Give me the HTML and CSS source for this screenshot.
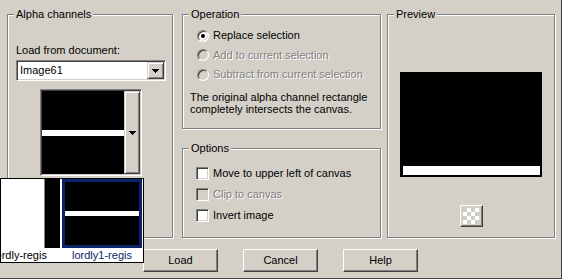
FILE: index.html
```html
<!DOCTYPE html>
<html>
<head>
  <link rel="stylesheet" href="styles.css">
</head>
<body>
  <div class="dialog">
    <div class="groups">
      <fieldset class="group alpha">
        <legend>Alpha channels</legend>
        <div class="field-label">Load from document:</div>
        <div class="combo">
          <span class="combo-text">Image61</span>
          <span class="drop-btn">
            <svg class="arrow" width="7" height="4" viewBox="0 0 7 4"><path d="M0 0h7v1h-1v1h-1v1h-1v1h-1v-1h-1v-1h-1v-1h-1z" fill="#000"/></svg>
          </span>
        </div>
        <div class="picker">
          <div class="thumb"><div class="stripe"></div></div>
          <span class="drop-btn tall">
            <svg class="arrow" width="7" height="4" viewBox="0 0 7 4"><path d="M0 0h7v1h-1v1h-1v1h-1v1h-1v-1h-1v-1h-1v-1h-1z" fill="#000"/></svg>
          </span>
        </div>
      </fieldset>

      <div class="middle">
        <fieldset class="group operation">
          <legend>Operation</legend>
          <div class="radios">
            <div class="opt"><span class="radio checked"></span>Replace selection</div>
            <div class="opt disabled"><span class="radio"></span>Add to current selection</div>
            <div class="opt disabled"><span class="radio"></span>Subtract from current selection</div>
          </div>
          <p class="note">The original alpha channel rectangle<br>completely intersects the canvas.</p>
        </fieldset>

        <fieldset class="group options">
          <legend>Options</legend>
          <div class="checks">
            <div class="opt"><span class="check"></span>Move to upper left of canvas</div>
            <div class="opt disabled"><span class="check"></span>Clip to canvas</div>
            <div class="opt"><span class="check"></span>Invert image</div>
          </div>
        </fieldset>
      </div>

      <fieldset class="group preview">
        <legend>Preview</legend>
        <div class="preview-box"><div class="preview-bar"></div></div>
        <div class="btn checker-btn"><span class="checker"></span></div>
      </fieldset>
    </div>

    <div class="actions">
      <div class="btn">Load</div>
      <div class="btn">Cancel</div>
      <div class="btn">Help</div>
    </div>

    <!-- open thumbnail dropdown -->
    <div class="popup">
      <div class="track">
        <div class="item">
          <div class="item-thumb plain"></div>
          <div class="item-label">lordly-regis</div>
        </div>
        <div class="item selected">
          <div class="item-thumb"><div class="stripe"></div></div>
          <div class="item-label">lordly1-regis</div>
        </div>
      </div>
    </div>
  </div>
</body>
</html>
```

FILE: styles.css
```css
:root {
  --face: #d4d0c8;
  --shadow: #808080;
  --dark: #404040;
  --light: #ffffff;
  --select: #0a246a;
  --disabled: #808080;
}

* {
  box-sizing: border-box;
}

html,
body {
  margin: 0;
}

body {
  width: 562px;
  height: 279px;
  overflow: hidden;
  background: var(--face);
  font-family: "Liberation Sans", Arial, sans-serif;
  font-size: 11px;
  line-height: 13px;
  color: #000;
}

.dialog {
  position: relative;
  height: 279px;
  border-right: 1px solid var(--dark);
  border-bottom: 1px solid var(--dark);
}

.groups {
  display: flex;
  height: 238px;
  padding: 8px 0 0 7px;
}

.group {
  margin: 0;
  padding: 0;
  min-width: 0;
  border: 1px solid var(--shadow);
  box-shadow: inset 1px 1px 0 var(--light), 1px 1px 0 var(--light);
}

legend {
  margin-left: 6px;
  padding: 0 2px;
  line-height: 13px;
  background: var(--face);
}

/* alpha channels */
.alpha {
  width: 166px;
  height: 230px;
  margin-right: 9px;
}

.field-label {
  margin: 23px 0 0 8px;
}

.combo {
  display: flex;
  width: 150px;
  height: 21px;
  margin: 3px 0 0 8px;
  background: var(--light);
  border: 1px solid;
  border-color: var(--shadow) var(--light) var(--light) var(--shadow);
  box-shadow: inset 1px 1px 0 var(--dark), inset -1px -1px 0 var(--face);
  padding: 1px;
}

.combo-text {
  flex: 1;
  padding-left: 2px;
  line-height: 17px;
}

.drop-btn {
  display: flex;
  align-items: center;
  justify-content: center;
  width: 17px;
  height: 17px;
  background: var(--face);
  border: 1px solid;
  border-color: var(--face) var(--dark) var(--dark) var(--face);
  box-shadow: inset 1px 1px 0 var(--light), inset -1px -1px 0 var(--shadow);
}

.arrow {
  display: block;
}

.picker {
  display: flex;
  width: 102px;
  height: 87px;
  margin: 8px 0 0 32px;
  border: 1px solid;
  border-color: var(--shadow) var(--light) var(--light) var(--shadow);
  box-shadow: inset 1px 1px 0 var(--dark), inset -1px -1px 0 var(--face);
  padding: 1px;
}

.thumb {
  flex: 1;
  display: flex;
  flex-direction: column;
  justify-content: center;
  background: #000;
}

.stripe {
  height: 6px;
  background: var(--light);
}

.drop-btn.tall {
  width: 16px;
  height: auto;
}

/* operation / options */
.middle {
  display: flex;
  flex-direction: column;
  width: 199px;
  margin-right: 6px;
}

.operation {
  height: 121px;
}

.options {
  height: 96px;
  margin-top: 13px;
}

.radios {
  padding: 5px 0 0 14px;
}

.radios .opt {
  line-height: 19.5px;
}

.opt {
  display: flex;
  align-items: center;
  gap: 4px;
}

.opt.disabled {
  color: var(--disabled);
  text-shadow: 1px 1px 0 var(--light);
}

.radio {
  position: relative;
  width: 12px;
  height: 12px;
  border-radius: 50%;
  background: var(--light);
  border: 1px solid;
  border-color: var(--shadow) var(--light) var(--light) var(--shadow);
  box-shadow: inset 1px 1px 0 var(--dark), inset -1px -1px 0 var(--face);
}

.disabled .radio,
.disabled .check {
  background: var(--face);
}

.radio.checked::after {
  content: "";
  position: absolute;
  left: 3px;
  top: 3px;
  width: 4px;
  height: 4px;
  border-radius: 50%;
  background: #000;
}

.note {
  margin: 6px 0 0 7px;
  line-height: 12px;
}

.checks {
  padding: 8px 0 0 13px;
}

.checks .opt {
  line-height: 21px;
}

.check {
  width: 13px;
  height: 13px;
  background: var(--light);
  border: 1px solid;
  border-color: var(--shadow) var(--light) var(--light) var(--shadow);
  box-shadow: inset 1px 1px 0 var(--dark), inset -1px -1px 0 var(--face);
}

/* preview */
.preview {
  width: 168px;
  height: 230px;
}

.preview-box {
  display: flex;
  flex-direction: column;
  justify-content: flex-end;
  width: 142px;
  height: 105px;
  margin: 51px auto 0;
  padding: 0 2px 2px 3px;
  background: #000;
}

.preview-bar {
  height: 9px;
  background: var(--light);
}

.btn {
  display: flex;
  align-items: center;
  justify-content: center;
  width: 75px;
  height: 23px;
  background: var(--face);
  border: 1px solid;
  border-color: var(--light) var(--dark) var(--dark) var(--light);
  box-shadow: inset -1px -1px 0 var(--shadow);
}

.checker-btn {
  width: 23px;
  height: 22px;
  margin: 28px auto 0;
}

.checker {
  width: 16px;
  height: 16px;
  background: repeating-conic-gradient(#ffffff 0 25%, #cfcdc8 0 50%) 0 0 / 8px 8px;
}

/* bottom buttons */
.actions {
  display: flex;
  justify-content: center;
  gap: 25px;
  margin-top: 11px;
}

/* thumbnail dropdown list */
.popup {
  position: absolute;
  left: 0;
  top: 178px;
  width: 144px;
  overflow: hidden;
  background: var(--light);
  border: 1px solid #000;
}

.track {
  display: flex;
  gap: 2px;
  margin-left: -21px;
}

.item {
  flex: none;
  width: 80px;
}

.item-thumb {
  display: flex;
  flex-direction: column;
  justify-content: center;
  height: 69px;
  background: #000;
}

.item-thumb.plain {
  background: linear-gradient(to right, #fff 0 64px, #808080 64px 65px, #000 65px);
}

.selected .item-thumb {
  border: 3px solid var(--select);
}

.selected .stripe {
  height: 5px;
}

.item-label {
  text-align: center;
  line-height: 14px;
  white-space: nowrap;
}

.selected .item-label {
  color: var(--select);
}
```
